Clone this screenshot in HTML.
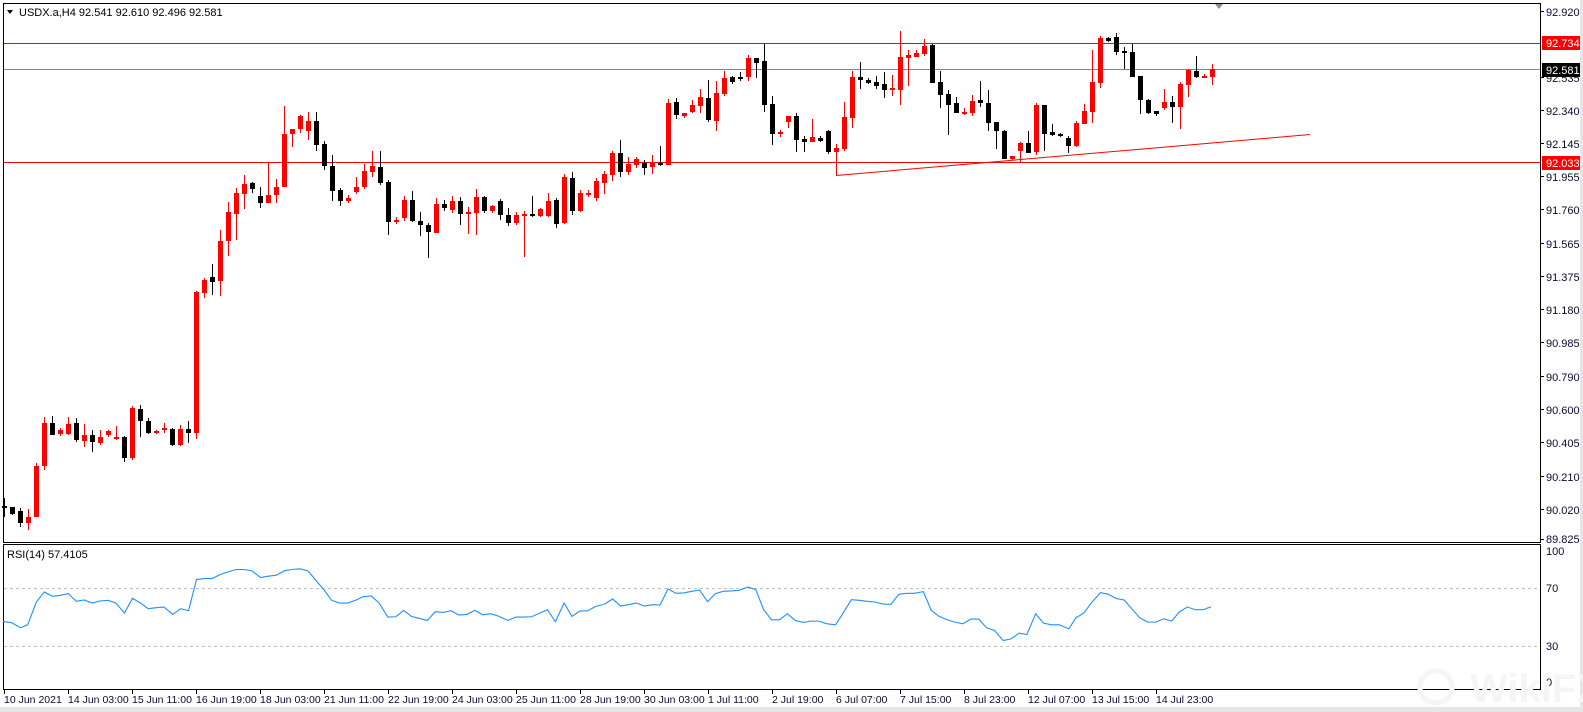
<!DOCTYPE html>
<html><head><meta charset="utf-8"><style>
html,body{margin:0;padding:0;background:#fff;}
svg{display:block;font-family:"Liberation Sans",Tahoma,sans-serif;}
</style></head><body>
<svg width="1583" height="712" viewBox="0 0 1583 712" xmlns="http://www.w3.org/2000/svg">
<rect x="0" y="0" width="1583" height="712" fill="#fff"/>
<rect x="0" y="707" width="1583" height="5" fill="#e6e6e6"/>
<rect x="1580" y="0" width="3" height="712" fill="#e6e6e6"/>
<rect x="3.5" y="3.5" width="1537" height="539" fill="none" stroke="#000" stroke-width="1"/>
<rect x="3.5" y="544.5" width="1537" height="145" fill="none" stroke="#000" stroke-width="1"/>
<line x1="4" y1="43.5" x2="1540" y2="43.5" stroke="#ff0000" stroke-width="1"/>
<line x1="4" y1="69.5" x2="1540" y2="69.5" stroke="#778899" stroke-width="1"/>
<line x1="4" y1="162.5" x2="1540" y2="162.5" stroke="#ff0000" stroke-width="1"/>
<polyline points="836,175.5 1310,134.5" fill="none" stroke="#ff0000" stroke-width="1"/>
<polygon points="1215,4 1223,4 1219,9" fill="#8090a0"/>
<path fill="#000" d="M4 498h1v19h-1zM12 507h1v8h-1zM20 508h1v19h-1zM52 416h1v19h-1zM76 418h1v24h-1zM92 430h1v22h-1zM124 436h1v26h-1zM140 405h1v32h-1zM148 418h1v16h-1zM172 428h1v18h-1zM188 421h1v22h-1zM212 264h1v31h-1zM252 182h1v11h-1zM260 187h1v21h-1zM316 112h1v39h-1zM324 141h1v29h-1zM332 155h1v46h-1zM340 188h1v18h-1zM380 151h1v34h-1zM388 180h1v55h-1zM412 191h1v31h-1zM420 212h1v24h-1zM428 223h1v35h-1zM444 200h1v11h-1zM460 197h1v28h-1zM484 196h1v17h-1zM500 199h1v21h-1zM508 208h1v18h-1zM532 196h1v21h-1zM556 198h1v30h-1zM572 172h1v43h-1zM620 140h1v37h-1zM644 160h1v15h-1zM660 146h1v20h-1zM676 98h1v21h-1zM708 80h1v42h-1zM732 76h1v8h-1zM740 72h1v9h-1zM756 58h1v20h-1zM764 44h1v68h-1zM772 96h1v49h-1zM796 113h1v39h-1zM804 136h1v16h-1zM820 136h1v6h-1zM828 130h1v24h-1zM860 62h1v27h-1zM868 78h1v6h-1zM876 76h1v13h-1zM884 72h1v26h-1zM932 44h1v39h-1zM940 71h1v37h-1zM948 90h1v45h-1zM956 97h1v16h-1zM980 81h1v26h-1zM988 90h1v41h-1zM996 122h1v27h-1zM1004 130h1v29h-1zM1028 131h1v22h-1zM1044 105h1v46h-1zM1052 124h1v12h-1zM1060 133h1v4h-1zM1068 136h1v17h-1zM1108 37h1v5h-1zM1116 33h1v22h-1zM1124 47h1v22h-1zM1132 44h1v33h-1zM1140 76h1v38h-1zM1148 99h1v15h-1zM1156 111h1v5h-1zM1172 96h1v27h-1zM1196 56h1v22h-1z"/>
<path fill="#000" d="M2 506h5v2h-5zM10 507h5v7h-5zM18 511h5v12h-5zM50 423h5v12h-5zM74 423h5v17h-5zM90 435h5v7h-5zM122 437h5v21h-5zM138 409h5v12h-5zM146 421h5v12h-5zM170 429h5v16h-5zM186 429h5v4h-5zM210 277h5v5h-5zM250 183h5v6h-5zM258 196h5v7h-5zM314 121h5v24h-5zM322 144h5v22h-5zM330 166h5v25h-5zM338 190h5v11h-5zM378 167h5v16h-5zM386 182h5v40h-5zM410 200h5v21h-5zM418 221h5v4h-5zM426 225h5v7h-5zM442 204h5v4h-5zM458 201h5v13h-5zM482 197h5v14h-5zM498 201h5v14h-5zM506 215h5v8h-5zM530 214h5v2h-5zM554 200h5v24h-5zM570 178h5v33h-5zM618 153h5v19h-5zM642 163h5v5h-5zM658 163h5v2h-5zM674 102h5v13h-5zM706 98h5v22h-5zM730 77h5v5h-5zM738 77h5v2h-5zM754 58h5v5h-5zM762 61h5v44h-5zM770 104h5v30h-5zM794 116h5v24h-5zM802 139h5v3h-5zM818 138h5v3h-5zM826 131h5v21h-5zM858 77h5v3h-5zM866 80h5v3h-5zM874 82h5v4h-5zM882 84h5v6h-5zM930 45h5v38h-5zM938 82h5v13h-5zM946 94h5v11h-5zM954 103h5v10h-5zM978 100h5v3h-5zM986 103h5v20h-5zM994 122h5v9h-5zM1002 131h5v28h-5zM1026 143h5v10h-5zM1042 105h5v29h-5zM1050 132h5v3h-5zM1058 134h5v2h-5zM1066 138h5v8h-5zM1106 38h5v3h-5zM1114 37h5v15h-5zM1122 51h5v2h-5zM1130 52h5v25h-5zM1138 76h5v24h-5zM1146 100h5v13h-5zM1154 111h5v3h-5zM1170 102h5v5h-5zM1194 71h5v6h-5z"/>
<path fill="#ff0000" d="M28 509h1v21h-1zM36 463h1v54h-1zM44 417h1v53h-1zM60 428h1v8h-1zM68 417h1v18h-1zM84 424h1v23h-1zM100 430h1v15h-1zM108 430h1v7h-1zM116 426h1v14h-1zM132 406h1v54h-1zM156 430h1v4h-1zM164 423h1v10h-1zM180 425h1v21h-1zM196 291h1v148h-1zM204 278h1v20h-1zM220 230h1v66h-1zM228 202h1v54h-1zM236 188h1v52h-1zM244 175h1v34h-1zM268 162h1v41h-1zM276 179h1v24h-1zM284 106h1v81h-1zM292 129h1v18h-1zM300 115h1v18h-1zM308 112h1v28h-1zM348 195h1v8h-1zM356 177h1v17h-1zM364 164h1v25h-1zM372 151h1v26h-1zM396 217h1v7h-1zM404 196h1v25h-1zM436 198h1v35h-1zM452 196h1v17h-1zM468 207h1v27h-1zM476 189h1v46h-1zM492 205h1v8h-1zM516 212h1v13h-1zM524 211h1v46h-1zM540 208h1v9h-1zM548 193h1v24h-1zM564 174h1v50h-1zM580 190h1v22h-1zM588 190h1v7h-1zM596 178h1v23h-1zM604 171h1v23h-1zM612 151h1v30h-1zM628 157h1v18h-1zM636 157h1v11h-1zM652 155h1v19h-1zM668 99h1v66h-1zM684 113h1v5h-1zM692 100h1v13h-1zM700 89h1v24h-1zM716 81h1v50h-1zM724 71h1v25h-1zM748 55h1v26h-1zM780 130h1v7h-1zM788 116h1v12h-1zM812 119h1v23h-1zM836 144h1v31h-1zM844 102h1v49h-1zM852 71h1v57h-1zM892 75h1v21h-1zM900 31h1v74h-1zM908 50h1v36h-1zM916 50h1v7h-1zM924 39h1v17h-1zM964 108h1v7h-1zM972 95h1v21h-1zM1012 156h1v4h-1zM1020 142h1v20h-1zM1036 103h1v52h-1zM1076 121h1v26h-1zM1084 104h1v20h-1zM1092 50h1v73h-1zM1100 36h1v52h-1zM1164 89h1v21h-1zM1180 82h1v47h-1zM1188 69h1v28h-1zM1204 74h1v4h-1zM1212 64h1v21h-1z"/>
<path fill="#ff0000" d="M26 517h5v6h-5zM34 466h5v51h-5zM42 423h5v43h-5zM58 430h5v4h-5zM66 424h5v10h-5zM82 435h5v6h-5zM98 437h5v6h-5zM106 431h5v4h-5zM114 437h5v2h-5zM130 408h5v50h-5zM154 431h5v2h-5zM162 428h5v2h-5zM178 429h5v16h-5zM194 292h5v141h-5zM202 280h5v13h-5zM218 241h5v40h-5zM226 212h5v29h-5zM234 193h5v21h-5zM242 184h5v10h-5zM266 195h5v8h-5zM274 187h5v8h-5zM282 134h5v53h-5zM290 129h5v5h-5zM298 116h5v13h-5zM306 121h5v10h-5zM346 198h5v3h-5zM354 187h5v5h-5zM362 171h5v16h-5zM370 166h5v6h-5zM394 220h5v2h-5zM402 200h5v18h-5zM434 204h5v29h-5zM450 201h5v9h-5zM466 212h5v2h-5zM474 197h5v16h-5zM490 206h5v5h-5zM514 215h5v8h-5zM522 214h5v2h-5zM538 209h5v7h-5zM546 201h5v15h-5zM562 177h5v46h-5zM578 193h5v18h-5zM586 193h5v2h-5zM594 181h5v17h-5zM602 174h5v9h-5zM610 153h5v22h-5zM626 164h5v8h-5zM634 159h5v6h-5zM650 163h5v4h-5zM666 103h5v62h-5zM682 113h5v3h-5zM690 105h5v7h-5zM698 97h5v9h-5zM714 93h5v28h-5zM722 78h5v16h-5zM746 58h5v19h-5zM778 132h5v2h-5zM786 116h5v6h-5zM810 137h5v5h-5zM834 148h5v4h-5zM842 117h5v32h-5zM850 77h5v41h-5zM890 88h5v2h-5zM898 57h5v33h-5zM906 55h5v3h-5zM914 53h5v4h-5zM922 46h5v8h-5zM962 112h5v2h-5zM970 101h5v12h-5zM1010 156h5v3h-5zM1018 143h5v8h-5zM1034 105h5v47h-5zM1074 123h5v23h-5zM1082 111h5v13h-5zM1090 82h5v30h-5zM1098 38h5v45h-5zM1162 102h5v6h-5zM1178 84h5v23h-5zM1186 70h5v15h-5zM1202 76h5v2h-5zM1210 69h5v8h-5z"/>
<polygon points="7,10 13,10 10,14" fill="#000"/>
<text x="19" y="16" font-size="11" fill="#000">USDX.a,H4  92.541 92.610 92.496 92.581</text>
<g font-size="11" fill="#0a0a30" stroke="none">
<path d="M1541 11.5h3M1541 77.5h3M1541 110.5h3M1541 143.5h3M1541 176.5h3M1541 209.5h3M1541 243.5h3M1541 276.5h3M1541 309.5h3M1541 342.5h3M1541 376.5h3M1541 409.5h3M1541 442.5h3M1541 476.5h3M1541 509.5h3M1541 539.5h3" stroke="#000" stroke-width="1"/>
<text x="1546" y="16">92.920</text>
<text x="1546" y="82">92.535</text>
<text x="1546" y="115">92.340</text>
<text x="1546" y="148">92.145</text>
<text x="1546" y="181">91.955</text>
<text x="1546" y="214">91.760</text>
<text x="1546" y="248">91.565</text>
<text x="1546" y="281">91.375</text>
<text x="1546" y="314">91.180</text>
<text x="1546" y="347">90.985</text>
<text x="1546" y="381">90.790</text>
<text x="1546" y="414">90.600</text>
<text x="1546" y="447">90.405</text>
<text x="1546" y="481">90.210</text>
<text x="1546" y="514">90.020</text>
<text x="1546" y="543">89.825</text>
</g>
<rect x="1542" y="36" width="38" height="14" fill="#ff0000"/>
<text x="1546" y="47" font-size="11" fill="#fff">92.734</text>
<rect x="1542" y="63" width="38" height="14" fill="#000"/>
<text x="1546" y="74" font-size="11" fill="#fff">92.581</text>
<rect x="1542" y="156" width="38" height="14" fill="#ff0000"/>
<text x="1546" y="167" font-size="11" fill="#fff">92.033</text>
<line x1="4" y1="588.5" x2="1540" y2="588.5" stroke="#c0c0c0" stroke-dasharray="3,3"/>
<line x1="4" y1="646.5" x2="1540" y2="646.5" stroke="#c0c0c0" stroke-dasharray="3,3"/>
<text x="7" y="558" font-size="11" fill="#000">RSI(14) 57.4105</text>
<g font-size="11" fill="#0a0a30">
<text x="1546" y="555">100</text>
<text x="1546" y="592">70</text>
<text x="1546" y="650">30</text>
<text x="1546" y="686">0</text>
</g>
<g transform="translate(0,540) scale(0.3953,0.3352)">
<polyline fill="none" stroke="#1e90ff" stroke-width="1.1" vector-effect="non-scaling-stroke" points="8,243 30,247 52,262 70,253 92,185 112,155 133,168 153,165 173,160 193,183 213,179 233,188 253,182 273,180 293,188 315,218 335,174 355,188 375,205 395,202 415,200 437,222 457,205 477,211 497,118 517,115 537,115 557,103 577,95 597,88 617,88 637,92 659,112 679,108 699,105 719,92 739,88 759,86 779,92 799,120 819,148 839,180 859,188 879,188 899,180 919,169 939,167 959,188 981,230 1001,229 1021,210 1041,228 1061,234 1081,240 1101,214 1121,216 1141,211 1161,224 1181,222 1201,210 1221,223 1241,220 1261,227 1285,240 1305,230 1325,230 1345,229 1365,218 1385,208 1405,244 1427,188 1447,228 1467,212 1487,211 1507,198 1527,192"/>
</g>
<g transform="translate(600,540) scale(0.3953,0.3352)">
<polyline fill="none" stroke="#1e90ff" stroke-width="1.1" vector-effect="non-scaling-stroke" points="10,192 32,176 52,197 72,193 92,188 112,197 132,193 152,194 172,146 192,159 212,158 232,153 252,149 272,184 292,160 312,153 332,152 352,150 374,140 394,148 414,208 434,238 454,238 474,220 494,240 514,246 534,242 554,242 574,250 596,253 616,216 636,178 656,180 676,183 696,185 716,191 736,192 756,162 776,159 796,159 818,154 838,210 858,228 878,238 898,245 918,250 938,236 958,236 978,262 998,270 1020,300 1040,295 1060,278 1080,282 1102,220 1122,248 1142,253 1162,253 1186,265 1204,232 1224,218 1244,186 1266,157 1286,162 1306,175 1326,179 1346,206 1366,233 1386,245 1406,245 1426,235 1446,242 1466,214 1486,200 1506,208 1526,208 1546,199"/>
</g>
<text x="1470" y="702" font-size="40" font-weight="bold" fill="#f5f5f5">WikiFX</text>
<circle cx="1436" cy="687" r="16" fill="none" stroke="#f5f5f5" stroke-width="5"/>
<path stroke="#000" stroke-width="1" d="M4.5 690v4M68.5 690v4M132.5 690v4M196.5 690v4M260.5 690v4M324.5 690v4M388.5 690v4M452.5 690v4M516.5 690v4M580.5 690v4M644.5 690v4M708.5 690v4M772.5 690v4M836.5 690v4M900.5 690v4M964.5 690v4M1028.5 690v4M1092.5 690v4M1156.5 690v4"/>
<g font-size="10.5" fill="#0a0a30">
<text x="4" y="703">10 Jun 2021</text>
<text x="68" y="703">14 Jun 03:00</text>
<text x="132" y="703">15 Jun 11:00</text>
<text x="196" y="703">16 Jun 19:00</text>
<text x="260" y="703">18 Jun 03:00</text>
<text x="324" y="703">21 Jun 11:00</text>
<text x="388" y="703">22 Jun 19:00</text>
<text x="452" y="703">24 Jun 03:00</text>
<text x="516" y="703">25 Jun 11:00</text>
<text x="580" y="703">28 Jun 19:00</text>
<text x="644" y="703">30 Jun 03:00</text>
<text x="708" y="703">1 Jul 11:00</text>
<text x="772" y="703">2 Jul 19:00</text>
<text x="836" y="703">6 Jul 07:00</text>
<text x="900" y="703">7 Jul 15:00</text>
<text x="964" y="703">8 Jul 23:00</text>
<text x="1028" y="703">12 Jul 07:00</text>
<text x="1092" y="703">13 Jul 15:00</text>
<text x="1156" y="703">14 Jul 23:00</text>
</g>
</svg>
</body></html>
